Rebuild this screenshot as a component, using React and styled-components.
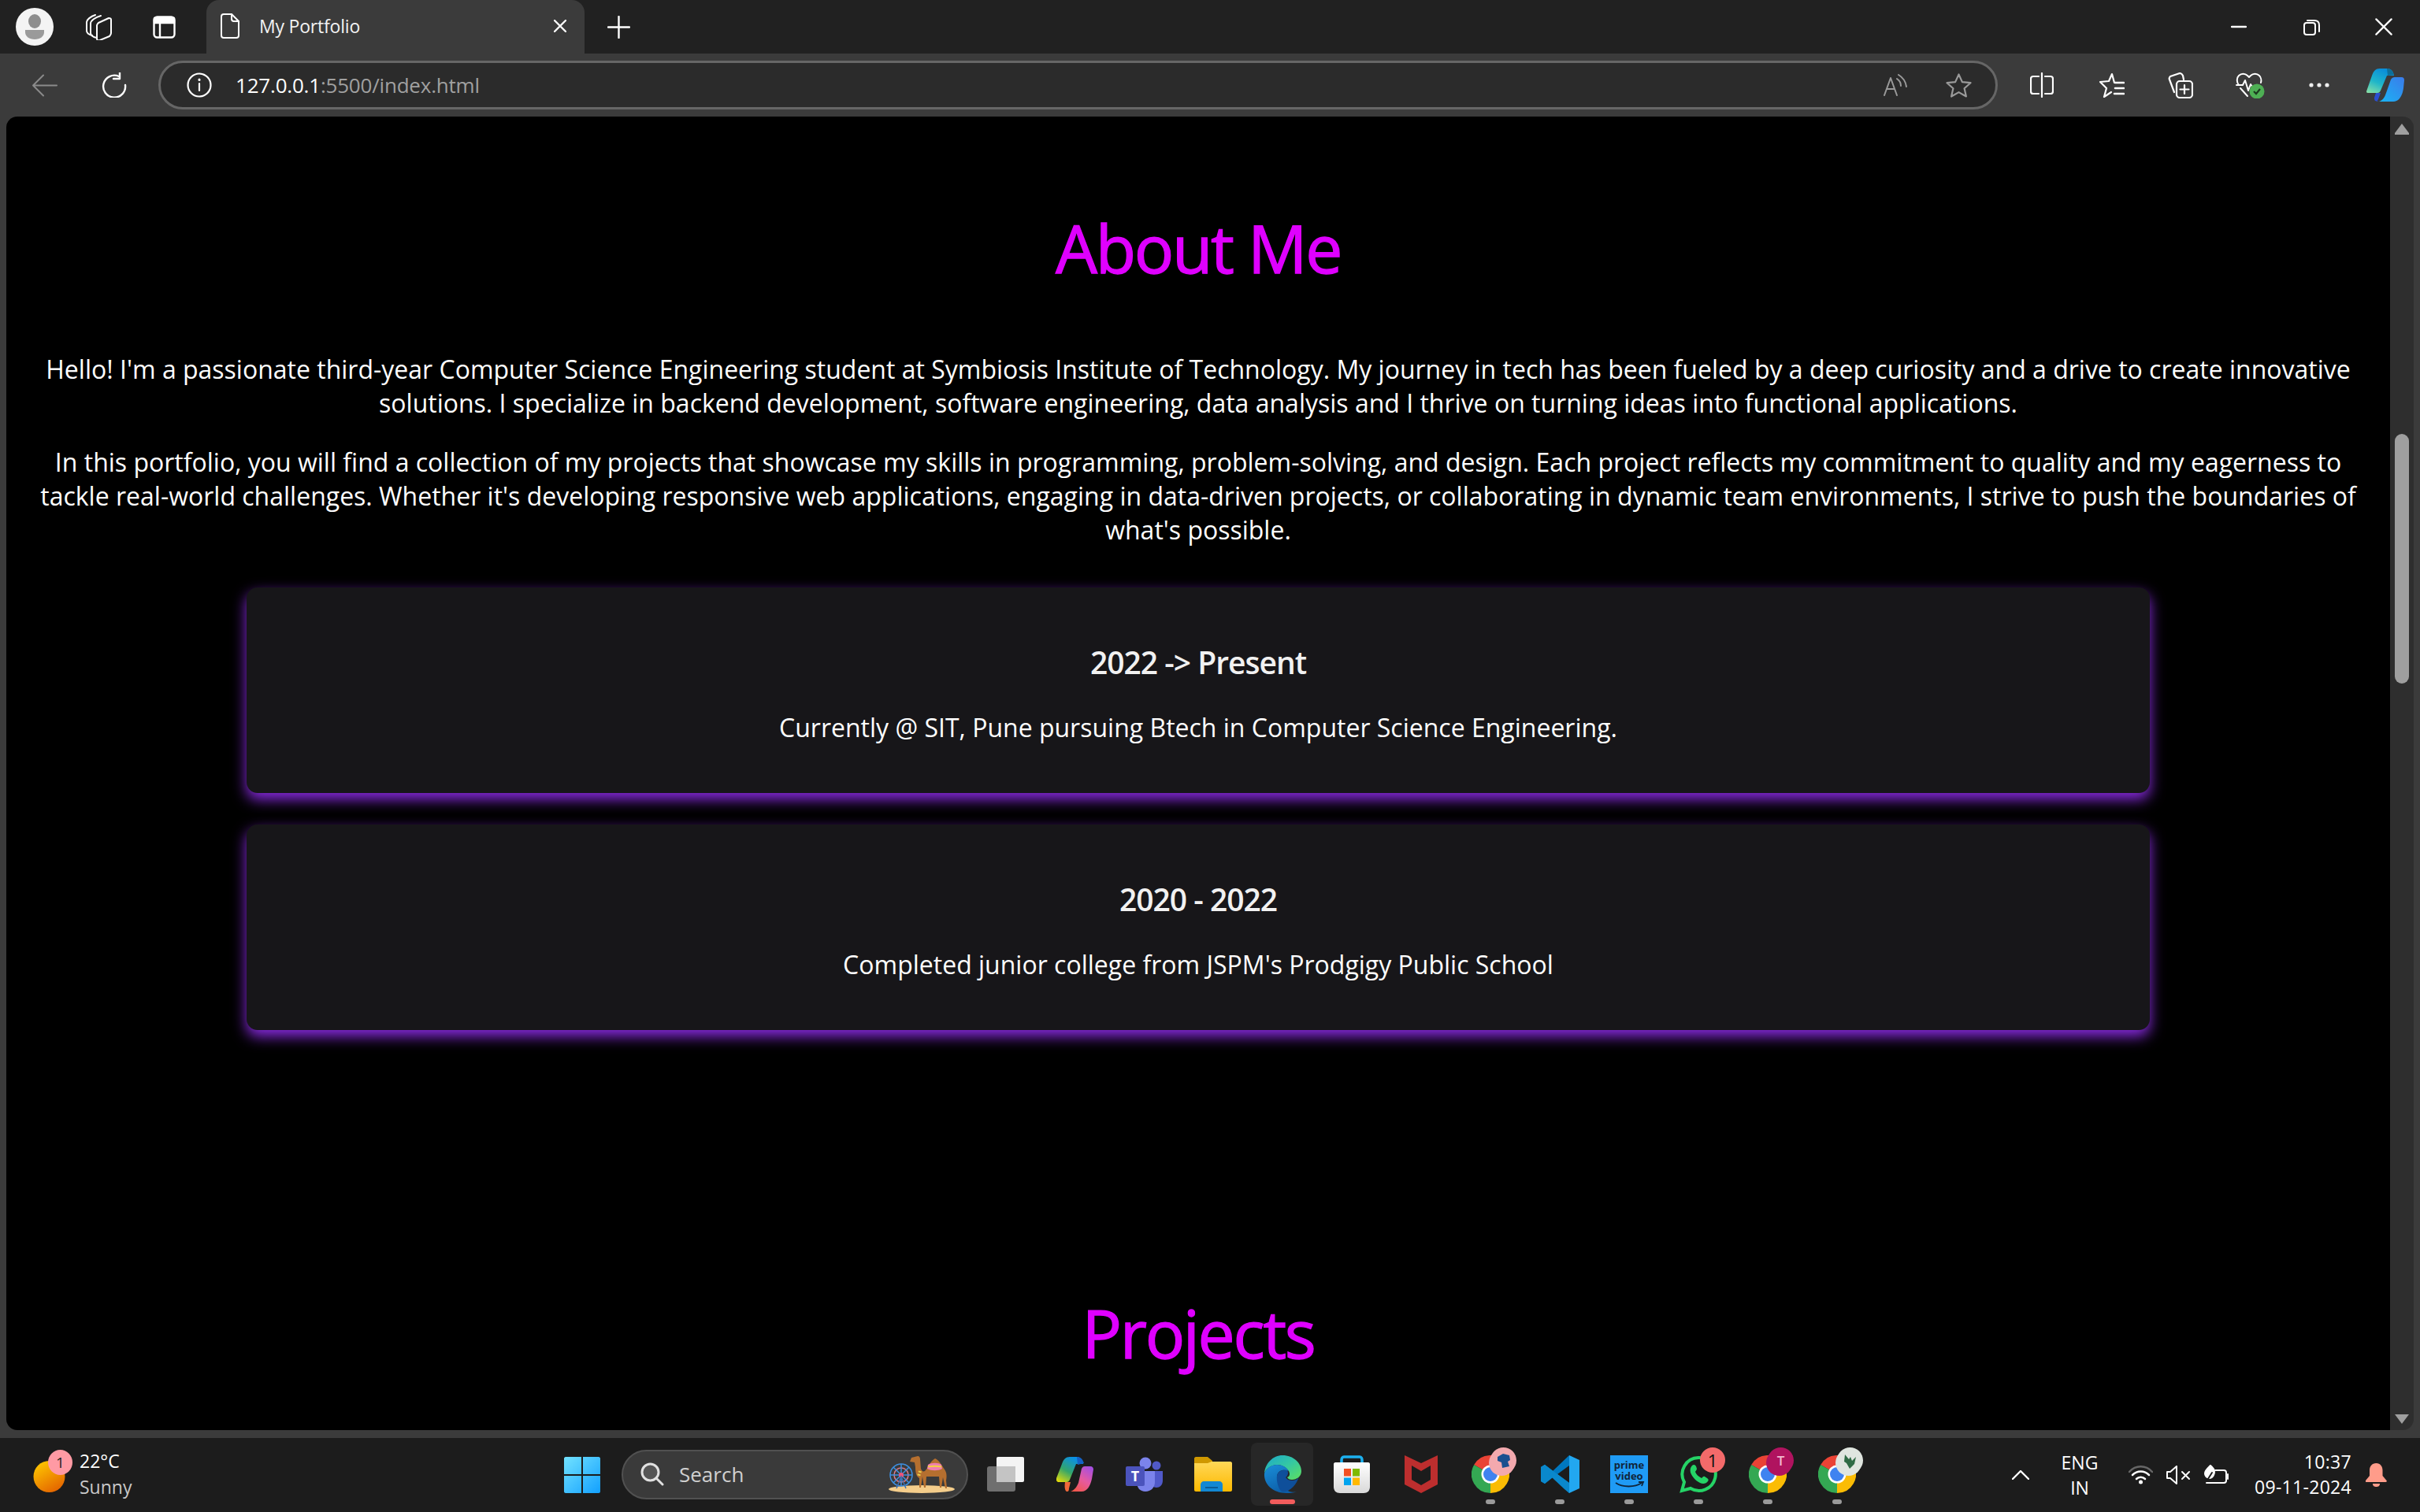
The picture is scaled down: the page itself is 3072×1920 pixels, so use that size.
import React from "react";
import styled, { createGlobalStyle } from "styled-components";

const GlobalStyle = createGlobalStyle`
  html, body {
    margin: 0;
    padding: 0;
    height: 100%;
    overflow: hidden;
    background: #1c1c1c;
  }
  #root { height: 100%; }
`;

const uiFont = `"Open Sans", "Noto Sans", sans-serif`;

const Screen = styled.div`
  display: flex;
  flex-direction: column;
  width: 3072px;
  height: 1920px;
  font-family: ${uiFont};
  color: #fff;
`;

/* browser chrome */
const TitleBar = styled.div`
  display: flex;
  align-items: center;
  height: 68px;
  flex: none;
  background: #212121;
`;
const Slot = styled.div`
  display: flex;
  align-items: center;
  justify-content: center;
  flex: none;
  width: ${(p) => p.$w || 88}px;
  height: 100%;
`;
const Tab = styled.div`
  display: flex;
  align-items: center;
  width: 480px;
  height: 68px;
  margin-left: 8px;
  padding: 0 23px 2px 18px;
  box-sizing: border-box;
  background: #3b3b3b;
  border-radius: 16px 16px 0 0;
`;
const TabTitle = styled.span`
  flex: 1;
  margin-left: 25px;
  font-size: 23px;
  letter-spacing: -0.2px;
  color: #f2f2f2;
`;
const Spacer = styled.div`
  flex: 1;
`;
const Toolbar = styled.div`
  display: flex;
  align-items: center;
  height: 80px;
  flex: none;
  padding-left: 12px;
  background: #3b3b3b;
`;
const AddressBar = styled.div`
  display: flex;
  align-items: center;
  width: 2335px;
  height: 62px;
  margin: 0 12px 0 13px;
  padding: 0 30px 0 33px;
  box-sizing: border-box;
  background: #2b2b2b;
  border: 3px solid #666;
  border-radius: 31px;
`;
const Url = styled.div`
  flex: 1;
  margin-left: 30px;
  font-size: 26px;
  letter-spacing: -0.2px;
  color: #a0a0a0;
`;
const UrlHost = styled.span`
  color: #fff;
`;
const AddressIcons = styled.div`
  display: flex;
  align-items: center;
  gap: 48px;
`;

/* page area */
const ViewportRow = styled.div`
  display: flex;
  flex: 1;
  min-height: 0;
  padding: 0 8px 10px;
  background: #3b3b3b;
`;
const Page = styled.main`
  flex: 1;
  min-width: 0;
  overflow: hidden;
  background: #000;
  border-radius: 14px 0 0 14px;
  text-align: center;
`;
const Scrollbar = styled.div`
  display: flex;
  flex-direction: column;
  align-items: center;
  justify-content: space-between;
  flex: none;
  width: 30px;
  padding: 9px 0 8px;
  box-sizing: border-box;
  background: #2e2e2e;
  border-radius: 0 14px 14px 0;
`;
const ScrollThumb = styled.div`
  width: 18px;
  height: 317px;
  margin-top: 380px;
  margin-bottom: auto;
  background: #9f9f9f;
  border-radius: 9px;
`;
const SectionTitle = styled.h1`
  margin: ${(p) => p.$top}px 0 0;
  font-size: 84px;
  line-height: 114px;
  font-weight: 400;
  letter-spacing: -2.400px;
  -webkit-text-stroke: 1.300px #df00ff;
  color: #df00ff;
`;
const Intro = styled.div`
  margin: 75px 40px 0;
`;
const Paragraph = styled.p`
  margin: 0 0 32px;
  font-size: 32px;
  line-height: 43px;
  color: #fff;
`;
const Timeline = styled.div`
  display: flex;
  flex-direction: column;
  gap: 40px;
  width: 2416px;
  margin: 52px auto 0;
`;
const Card = styled.article`
  padding: 68px 0 62px;
  background: #171619;
  border-radius: 14px;
  box-shadow: 0 8px 18px rgb(138, 43, 226);
`;
const CardTitle = styled.h3`
  margin: 0 0 34px;
  font-size: 39px;
  line-height: 54px;
  font-weight: 600;
  letter-spacing: -1px;
  color: #f1f1f1;
`;
const CardText = styled.p`
  margin: 0;
  font-size: 32px;
  line-height: 43px;
  color: #fff;
`;

/* taskbar */
const Taskbar = styled.footer`
  display: flex;
  align-items: center;
  flex: none;
  height: 94px;
  background: #1c1c1c;
`;
const Weather = styled.div`
  display: flex;
  align-items: center;
  width: 716px;
  padding-left: 42px;
  box-sizing: border-box;
`;
const SunWrap = styled.div`
  position: relative;
  display: flex;
  margin-top: 3px;
`;
const SunBadge = styled.span`
  position: absolute;
  top: -14px;
  left: 19px;
  width: 31px;
  height: 32px;
  border-radius: 50%;
  background: #ff9aa4;
  color: #222;
  font-size: 19px;
  line-height: 32px;
  text-align: center;
`;
const WeatherText = styled.div`
  margin: -3px 0 0 18px;
  font-size: 23px;
  line-height: 33px;
`;
const WeatherState = styled.div`
  color: #c9c9c9;
`;
const SearchBox = styled.div`
  display: flex;
  align-items: center;
  width: 440px;
  height: 63px;
  margin: -2px 0 0 27px;
  padding: 0 15px 0 22px;
  box-sizing: border-box;
  background: #3a3a3a;
  border: 2px solid #515151;
  border-radius: 32px;
`;
const SearchLabel = styled.span`
  flex: 1;
  margin-left: 19px;
  font-size: 26px;
  color: #d0d0d0;
`;
const AppSlot = styled.div`
  position: relative;
  display: flex;
  align-items: center;
  justify-content: center;
  flex: none;
  width: 88px;
  height: 94px;
`;
const ActiveBox = styled.div`
  position: absolute;
  top: 6px;
  left: 4px;
  width: 79px;
  height: 80px;
  background: #272727;
  border-radius: 8px;
`;
const AppIcon = styled.div`
  position: relative;
  display: flex;
  margin-top: -2px;
`;
const Running = styled.span`
  position: absolute;
  bottom: 10px;
  left: 50%;
  width: ${(p) => (p.$active ? 32 : 12)}px;
  height: 6px;
  margin-left: ${(p) => (p.$active ? -16 : -6)}px;
  border-radius: 3px;
  background: ${(p) => (p.$active ? "#f25c5c" : "#9a9a9a")};
`;
const CountBadge = styled.span`
  position: absolute;
  top: 12px;
  left: 46px;
  width: 32px;
  height: 32px;
  border-radius: 50%;
  background: #f46a6a;
  color: #111;
  font-size: 22px;
  line-height: 32px;
  text-align: center;
`;
const ProfileBadge = styled.span`
  position: absolute;
  top: 12px;
  left: 44px;
  width: 33px;
  height: 33px;
  display: flex;
  align-items: center;
  justify-content: center;
  border-radius: 50%;
  background: ${(p) => p.$bg};
  box-shadow: -2px 3px 0 ${(p) => p.$bg};
  color: #f3b8cf;
  font-size: 17px;
  font-weight: 600;
`;
const Tray = styled.div`
  display: flex;
  align-items: center;
  height: 100%;
  margin-left: 178px;
`;
const Lang = styled.div`
  width: 66px;
  margin-left: 31px;
  font-size: 23px;
  line-height: 32px;
  text-align: center;
`;
const TrayIcons = styled.div`
  display: flex;
  align-items: center;
  gap: 17px;
  margin-left: 29px;
`;
const Clock = styled.div`
  width: 140px;
  margin: -2px 0 0 16px;
  font-size: 23px;
  letter-spacing: 0.3px;
  line-height: 32px;
  text-align: right;
`;
const BellWrap = styled.div`
  display: flex;
  margin-left: 18px;
`;

const Line = styled.svg`
  display: block;
  flex: none;
  fill: none;
  stroke: ${(p) => p.$color || "#fff"};
  stroke-width: ${(p) => p.$sw || 2.4};
  stroke-linecap: round;
  stroke-linejoin: round;
`;
const Art = styled.svg`
  display: block;
  flex: none;
`;

const Avatar = () => (
  <Art width="48" height="48" viewBox="0 0 48 48">
    <circle cx="24" cy="24" r="24" fill="#f4f4f4" />
    <ellipse cx="24" cy="17" rx="8" ry="9" fill="#8e8e8e" />
    <path d="M12 28h24v3c0 5-5 9-12 9s-12-4-12-9z" fill="#9a9a9a" />
  </Art>
);
const Workspaces = () => (
  <Line width="33" height="33" viewBox="0 0 33 33" $sw="2">
    <path d="M8 27c-4-1-7-3-7-6V10c0-3 5-7 11-9" />
    <path d="M14 30c-5-1-8-3-8-6V12c0-4 6-8 13-10" />
    <path d="M14 14c0-1 1-2 2-3l13-6c2 0 3 0 3 2v17c0 2-1 3-2 4l-12 5c-3 1-4 0-4-2z" />
  </Line>
);
const VerticalTabs = () => (
  <Line width="29" height="29" viewBox="0 0 29 29">
    <rect x="1.5" y="1.5" width="26" height="26" rx="4" />
    <path d="M2 3h25v6H2z" fill="#fff" />
    <path d="M9 9v18" />
  </Line>
);
const DocIcon = () => (
  <Line width="24" height="32" viewBox="0 0 24 32" $sw="2">
    <path d="M4 1h10l9 9v18c0 2-1 3-3 3H4c-2 0-3-1-3-3V4c0-2 1-3 3-3z" />
    <path d="M14 1v6c0 2 1 3 3 3h6" />
  </Line>
);
const Cross = ({ size = 16, sw = 2.4 }) => (
  <Line width={size} height={size} viewBox="0 0 16 16" $sw={sw}>
    <path d="M1 1l14 14M15 1L1 15" />
  </Line>
);
const Plus = () => (
  <Line width="29" height="29" viewBox="0 0 29 29" $sw="2.4">
    <path d="M14.500 1v27M1 14.500h27" />
  </Line>
);
const Minimize = () => (
  <Line width="20" height="4" viewBox="0 0 20 4" $sw="2.4">
    <path d="M1 2h18" />
  </Line>
);
const Restore = () => (
  <Line width="21" height="21" viewBox="0 0 21 21" $sw="2">
    <rect x="1" y="5" width="14" height="15" rx="3" />
    <path d="M5 2h9c4 0 6 2 6 6v8" />
  </Line>
);
const BackArrow = () => (
  <Line width="33" height="29" viewBox="0 0 33 29" $color="#8b8b8b" $sw="2">
    <path d="M32 14.500H2M15 1.500L2 14.500l13 13" />
  </Line>
);
const Reload = () => (
  <Line width="34" height="32" viewBox="0 0 34 32" $sw="2.4">
    <path d="M24 5a14 14 0 1 0 8 11" />
    <path d="M25 0v8h-8" />
  </Line>
);
const InfoIcon = () => (
  <Line width="32" height="32" viewBox="0 0 32 32" $sw="2.2">
    <circle cx="16" cy="16" r="14.500" />
    <path d="M16 14v9" />
    <path d="M16 9v.5" strokeWidth="3" />
  </Line>
);
const ReadAloud = () => (
  <Line width="31" height="28" viewBox="0 0 31 28" $color="#9a9a9a" $sw="2">
    <path d="M1 27L9 5l8 22M4 19h10" />
    <path d="M17 6c3 2 5 5 5 9M19 1c5 3 9 8 10 15" />
  </Line>
);
const Star = () => (
  <Line width="33" height="31" viewBox="0 0 33 31" $color="#9a9a9a" $sw="2.2">
    <path d="M16.500 1.500l4.400 9.600 10.600 1.100-7.900 7 2.300 10.300-9.400-5.400-9.400 5.400 2.300-10.300-7.900-7 10.600-1.100z" />
  </Line>
);
const SplitScreen = () => (
  <Line width="30" height="32" viewBox="0 0 30 32" $sw="2.2">
    <path d="M11 5H4C2 5 1 6 1 8v16c0 2 1 3 3 3h7M19 5h7c2 0 3 1 3 3v16c0 2-1 3-3 3h-7M15 1v30" />
  </Line>
);
const Favorites = () => (
  <Line width="33" height="32" viewBox="0 0 33 32" $sw="2.200">
    <path d="M20 13l-3-11-4 9-11 1 8 8-3 11 9-6" />
    <path d="M21 13h11M21 20h11M20 27h12" strokeWidth="2.600" />
  </Line>
);
const Collections = () => (
  <Line width="32" height="33" viewBox="0 0 32 33" $sw="2.200">
    <path d="M8 25L2 9c-1-2 0-3 1-4l12-4c2 0 3 1 4 3l1 5" />
    <rect x="11" y="11" width="20" height="21" rx="4" />
    <path d="M21 16v11M15.500 21.500h11" />
  </Line>
);
const Health = () => (
  <Art width="37" height="33" viewBox="0 0 37 33">
    <Line as="g" $sw="2">
      <path d="M4 16C1 12 1 7 4 4c3-3 8-3 11 0l2 2 2-2c3-3 8-3 11 0 2 2 3 6 2 9" />
      <path d="M1 16h8l3-6 4 13 3-8 2 3" />
      <path d="M6 20l9 10" />
    </Line>
    <circle cx="27" cy="24" r="9.500" fill="#4eaf54" />
    <path d="M23 24l3 3 5-6" fill="none" stroke="#1c3a20" strokeWidth="2.200" />
  </Art>
);
const Dots = () => (
  <Art width="26" height="6" viewBox="0 0 26 6" fill="#eee">
    <circle cx="3" cy="3" r="2.600" />
    <circle cx="13" cy="3" r="2.600" />
    <circle cx="23" cy="3" r="2.600" />
  </Art>
);
const EdgeCopilot = () => (
  <Art width="48" height="42" viewBox="0 0 48 42">
    <defs>
      <linearGradient id="ec1" x1="0" y1="1" x2="0.500" y2="0">
        <stop offset="0" stopColor="#8fe3a5" />
        <stop offset="0.500" stopColor="#1fb6c9" />
        <stop offset="1" stopColor="#0a8fd9" />
      </linearGradient>
      <linearGradient id="ec2" x1="0" y1="1" x2="1" y2="0">
        <stop offset="0" stopColor="#19b5f5" />
        <stop offset="1" stopColor="#3b7bea" />
      </linearGradient>
    </defs>
    <path d="M26 0h-9c-5 0-8 3-10 9L0 29c0 2 1 2 3 2h11c2 0 3-1 4-3L26 9l9 0c-1-6-4-9-9-9z" fill="url(#ec1)" />
    <path d="M26 0c4 0 7 2 9 8l-8 1z" fill="#0d6f9a" />
    <path d="M36 11h8c3 0 4 1 4 4l-1 10c-1 8-5 17-13 17H16c5-2 7-5 9-11l6-17c1-2 3-3 5-3z" fill="url(#ec2)" />
    <path d="M12 31h6l-3 8c-1 2-2 3-3 3H16l-5-1c-1-1-1-3-1-4z" fill="#2a4ed0" />
  </Art>
);
const ArrowTriangle = ({ down }) => (
  <Art width="18" height="14" viewBox="0 0 18 14" fill="#9f9f9f">
    <path d={down ? "M0 2h18L9 14z" : "M9 0l9 12v2H0v-2z"} />
  </Art>
);

const SunIcon = () => (
  <Art width="41" height="40" viewBox="0 0 41 40">
    <defs>
      <linearGradient id="sun" x1="0.200" y1="0" x2="0.800" y2="1">
        <stop offset="0" stopColor="#ffc800" />
        <stop offset="1" stopColor="#e25f00" />
      </linearGradient>
    </defs>
    <circle cx="20.500" cy="20" r="20" fill="url(#sun)" />
  </Art>
);
const WindowsLogo = () => (
  <Art width="46" height="46" viewBox="0 0 46 46">
    <defs>
      <linearGradient id="win" x1="0" y1="0" x2="1" y2="1">
        <stop offset="0" stopColor="#72e2ff" />
        <stop offset="1" stopColor="#12a0ff" />
      </linearGradient>
    </defs>
    <path d="M2 0h20v22H0V2c0-1 1-2 2-2zM24 0h20c1 0 2 1 2 2v20H24zM0 24h22v22H2c-1 0-2-1-2-2zM24 24h22v20c0 1-1 2-2 2H24z" fill="url(#win)" />
  </Art>
);
const SearchIcon = () => (
  <Line width="30" height="30" viewBox="0 0 30 30" $color="#e0e0e0" $sw="3">
    <circle cx="12.500" cy="12.500" r="10.500" fill="#555" />
    <path d="M20 20l8 8" />
  </Line>
);
const CamelScene = () => (
  <Art width="84" height="48" viewBox="0 0 84 48">
    <ellipse cx="42" cy="43" rx="42" ry="5" fill="#f4cd8b" />
    <g fill="none" stroke="#3d8fe0" strokeWidth="1.500">
      <circle cx="16" cy="25" r="14" />
      <circle cx="16" cy="25" r="9" stroke="#d97a8c" />
      <path d="M16 11v28M2 25h28M6 15l20 20M26 15L6 35" />
    </g>
    <circle cx="16" cy="25" r="3" fill="#f0527a" />
    <path d="M10 42l6-15 6 15" fill="none" stroke="#3d6fb0" strokeWidth="1.500" />
    <path d="M29 3l8-2c2 0 3 2 3 4l1 12c1 3 3 4 5 3 4-3 6-12 13-16 5 2 8 8 12 14 3 4 3 9 2 14l1 10h-2l-3-14-2 13h-2l-1-14H48l-1 14h-2l-2-14-2 14h-2V29c-4-2-5-8-5-14l-1-6-6-1z" fill="#b56f2f" />
    <path d="M50 12c4-3 14-3 17 0l1 5c-5 3-14 3-19 0z" fill="#f07fb0" />
    <path d="M50 14.500c5-1 12-1 17 0" fill="none" stroke="#f5d340" strokeWidth="2" />
    <path d="M40 20l-2 7" stroke="#e8d04a" strokeWidth="4" strokeDasharray="2 2" fill="none" />
  </Art>
);
const TaskView = () => (
  <Art width="47" height="44" viewBox="0 0 47 44">
    <rect x="0" y="12" width="36" height="32" rx="3" fill="#6f6f6f" />
    <rect x="12" y="0" width="35" height="32" rx="2" fill="#f4f4f4" />
    <rect x="12" y="12" width="24" height="20" fill="#c4c4c4" />
  </Art>
);
const CopilotApp = () => (
  <Art width="47" height="44" viewBox="0 0 47 44">
    <defs>
      <linearGradient id="ca1" x1="0" y1="1" x2="0.600" y2="0">
        <stop offset="0" stopColor="#f5e000" />
        <stop offset="0.500" stopColor="#34a66a" />
        <stop offset="1" stopColor="#0a8fe6" />
      </linearGradient>
      <linearGradient id="ca2" x1="0.200" y1="1" x2="0.800" y2="0">
        <stop offset="0" stopColor="#f2574a" />
        <stop offset="0.500" stopColor="#e65aa0" />
        <stop offset="1" stopColor="#a64fe0" />
      </linearGradient>
    </defs>
    <path d="M26 0h-9c-5 0-8 3-10 9L0 27c-1 3 1 5 3 5h10c2 0 3-1 4-3l8-20h9c-1-6-4-9-8-9z" fill="url(#ca1)" />
    <path d="M26 0c4 0 7 2 9 8l-8 2z" fill="#1560c4" />
    <path d="M36 12h7c3 0 4 2 4 4l-2 12c-2 9-6 16-13 16H18c5-2 8-6 10-11l4-18c1-2 2-3 4-3z" fill="url(#ca2)" />
    <path d="M11 32h7l-2 8c0 3-1 4-2 4h-1c-2-1-3-5-2-12z" fill="#f0683a" />
  </Art>
);
const TeamsIcon = () => (
  <Art width="47" height="44" viewBox="0 0 47 44">
    <circle cx="25" cy="8" r="7.500" fill="#7b83eb" />
    <circle cx="39" cy="11" r="5.500" fill="#5059c9" />
    <path d="M31 18h16v12c0 6-4 9-8 9s-8-3-8-9z" fill="#5059c9" />
    <path d="M14 18h23v14c0 7-5 12-12 12S14 39 14 32z" fill="#7b83eb" />
    <rect x="0" y="12" width="24" height="25" rx="2" fill="#4b53bc" />
    <text x="12" y="31" textAnchor="middle" fontSize="18" fontWeight="700" fill="#fff" fontFamily="Open Sans">T</text>
  </Art>
);
const FolderIcon = () => (
  <Art width="48" height="44" viewBox="0 0 48 44">
    <defs>
      <linearGradient id="fold" x1="0" y1="0" x2="0" y2="1">
        <stop offset="0" stopColor="#ffd858" />
        <stop offset="1" stopColor="#fdb900" />
      </linearGradient>
    </defs>
    <path d="M2 0h15l6 5v8H0V2c0-1 1-2 2-2z" fill="#cf9800" />
    <path d="M0 8h17l5-2h24c1 0 2 1 2 2v34c0 1-1 2-2 2H2c-1 0-2-1-2-2z" fill="url(#fold)" />
    <path d="M8 44V35c0-2 2-4 4-4h20c2 0 4 2 4 4v9z" fill="#1388d3" />
    <path d="M14 39h16" stroke="#0b5c96" strokeWidth="2" />
  </Art>
);
const EdgeIcon = () => (
  <Art width="48" height="48" viewBox="0 0 48 48">
    <defs>
      <linearGradient id="edg1" x1="0" y1="0" x2="1" y2="1">
        <stop offset="0" stopColor="#1ca7c9" />
        <stop offset="0.500" stopColor="#34c7a4" />
        <stop offset="1" stopColor="#5ee05e" />
      </linearGradient>
      <linearGradient id="edg2" x1="0" y1="0" x2="0.500" y2="1">
        <stop offset="0" stopColor="#1a8fd9" />
        <stop offset="1" stopColor="#0c5ea8" />
      </linearGradient>
    </defs>
    <path d="M24 0c14 0 24 10 24 20 0 7-6 11-12 11-3 0-5-1-6-3 3-1 4-4 2-8-3-5-9-8-15-8C10 12 3 17 1 23 2 10 12 0 24 0z" fill="url(#edg1)" />
    <path d="M1 23c3-7 9-11 16-11 7 0 12 3 15 8-6-3-14-1-15 6-1 8 6 16 16 20 3 1 6 1 9 0-5 2-9 2-13 2C12 48 0 37 1 23z" fill="url(#edg2)" />
    <path d="M17 26c1-6 7-8 13-7 2 3 1 7-2 9 2 3 5 4 8 4 4 0 8-2 9-5-3 10-12 21-22 19-4-3-7-13-6-20z" fill="#0f4f9a" />
  </Art>
);
const StoreIcon = () => (
  <Art width="46" height="48" viewBox="0 0 46 48">
    <defs>
      <linearGradient id="bag" x1="0" y1="0" x2="0" y2="1">
        <stop offset="0" stopColor="#fff" />
        <stop offset="1" stopColor="#d9d9d9" />
      </linearGradient>
    </defs>
    <path d="M10 10V6c0-2 1-4 3-4h20c2 0 3 2 3 4v4" fill="none" stroke="#1cb0ee" strokeWidth="3.500" />
    <path d="M0 11c0-1 1-2 2-2h42c1 0 2 1 2 2v29c0 5-3 8-8 8H8c-5 0-8-3-8-8z" fill="url(#bag)" />
    <rect x="13" y="17" width="9" height="9.500" fill="#f25022" />
    <rect x="24" y="17" width="9" height="9.500" fill="#7fba00" />
    <rect x="13" y="28.500" width="9" height="9.500" fill="#00a4ef" />
    <rect x="24" y="28.500" width="9" height="9.500" fill="#ffb900" />
  </Art>
);
const McAfeeIcon = () => (
  <Art width="42" height="48" viewBox="0 0 42 48">
    <path d="M0 0l21 10L42 0v37L21 48 0 37zM9 13v18l12 7 12-7V13L21 20z" fill="#bd2e2e" fillRule="evenodd" />
  </Art>
);
const ChromeIcon = () => (
  <Art width="48" height="48" viewBox="0 0 48 48">
    <path d="M24 24L3.200 12A24 24 0 0 1 44.800 12z" fill="#ea4335" />
    <path d="M24 24L24 48A24 24 0 0 1 3.200 12z" fill="#34a853" />
    <path d="M24 24L44.800 12A24 24 0 0 1 24 48z" fill="#fbbc04" />
    <circle cx="24" cy="24" r="11.500" fill="#fff" />
    <circle cx="24" cy="24" r="9" fill="#3f83f0" />
  </Art>
);
const VsCodeIcon = () => (
  <Art width="49" height="48" viewBox="0 0 49 48">
    <path d="M36 0l13 6v36l-13 6z" fill="#22a7f0" />
    <path d="M36 0L15 20 5 12 0 15v18l5 3 10-8 21 20z" fill="#0078c0" />
    <path d="M36 13L21 24l15 11z" fill="#1c1c1c" />
    <path d="M5 12l-5 3 30 28 6 5v-13z" fill="#0a88cc" />
    <path d="M0 15v18l5 3 10-8-5-4 5-4-10-8z" fill="#0a88cc" />
  </Art>
);
const PrimeVideoIcon = () => (
  <Art width="48" height="48" viewBox="0 0 48 48">
    <rect width="48" height="48" fill="#1f9bf5" />
    <text x="24" y="17" textAnchor="middle" fontSize="13" fontWeight="700" fill="#10253a" fontFamily="Open Sans">prime</text>
    <text x="24" y="31" textAnchor="middle" fontSize="13" fontWeight="700" fill="#10253a" fontFamily="Open Sans">video</text>
    <path d="M7 35c9 6 24 6 33 0M36 34l6 0-2 5" fill="none" stroke="#10253a" strokeWidth="1.800" />
  </Art>
);
const WhatsAppIcon = () => (
  <Art width="48" height="48" viewBox="0 0 48 48">
    <path d="M24 3a21 21 0 0 0-18 31L3 45l11-3a21 21 0 1 0 10-39z" fill="none" stroke="#25d366" strokeWidth="4" />
    <path d="M16 13c2-2 4-1 5 1l1 3c0 2-2 3-2 4 1 3 4 6 8 8 1 0 2-3 4-2l3 2c2 1 2 3 1 4-2 3-6 4-10 2-6-3-10-8-12-13-1-4 0-7 2-9z" fill="#25d366" />
  </Art>
);
const ChevronUp = () => (
  <Line width="22" height="12" viewBox="0 0 22 12" $sw="2.400">
    <path d="M1 11L11 1l10 10" />
  </Line>
);
const WifiIcon = () => (
  <Art width="31" height="24" viewBox="0 0 31 24" fill="none" strokeLinecap="round">
    <path d="M1 8c8-9 21-9 29 0" stroke="#666" strokeWidth="2.500" />
    <path d="M5 12c6-6 15-6 21 0M10 17c3-3 8-3 11 0" stroke="#fff" strokeWidth="2.500" />
    <circle cx="15.500" cy="21" r="2.500" fill="#fff" />
  </Art>
);
const MutedIcon = () => (
  <Line width="31" height="24" viewBox="0 0 31 24" $sw="2">
    <path d="M1 8h4l8-7v22l-8-7H1z" />
    <path d="M20 8l9 9M29 8l-9 9" />
  </Line>
);
const BatteryLeaf = () => (
  <Line width="31" height="26" viewBox="0 0 31 26" $sw="2">
    <path d="M14 7h11c2 0 3 1 3 3v10c0 2-1 3-3 3H3" />
    <path d="M30 12v6" />
    <path d="M8 1c5 4 6 8 4 12-1 3-4 4-6 4-3-1-5-3-5-6 0-4 4-7 7-10z" fill="#fff" />
    <path d="M10 10l-7 11" stroke="#1c1c1c" />
  </Line>
);
const BellIcon = () => (
  <Art width="27" height="30" viewBox="0 0 27 30" fill="#ff9c8a">
    <path d="M13.500 0c5 0 8 4 8 9v7l5 6c1 1 0 2-1 2H1c-1 0-2-1-1-2l5-6V9c0-5 3-9 8.500-9z" />
    <path d="M9 26h9c0 3-2 4-4.500 4S9 29 9 26z" />
  </Art>
);

const Apps = [
  { key: "task", icon: <TaskView /> },
  { key: "copilot", icon: <CopilotApp /> },
  { key: "teams", icon: <TeamsIcon /> },
  { key: "folder", icon: <FolderIcon /> },
  { key: "edge", icon: <EdgeIcon />, active: true },
  { key: "store", icon: <StoreIcon /> },
  { key: "mcafee", icon: <McAfeeIcon /> },
  { key: "chrome1", icon: <ChromeIcon />, running: true, badge: <ProfileBadge $bg="#f3a9ae"><Art width="22" height="22" viewBox="0 0 22 22"><path d="M3 6l7-4 8 2 1 6-3 2 2 6-9 2-1-7-5-2z" fill="#1a4f8f" /></Art></ProfileBadge> },
  { key: "vscode", icon: <VsCodeIcon />, running: true },
  { key: "prime", icon: <PrimeVideoIcon />, running: true },
  { key: "whatsapp", icon: <WhatsAppIcon />, running: true, badge: <CountBadge>1</CountBadge> },
  { key: "chrome2", icon: <ChromeIcon />, running: true, badge: <ProfileBadge $bg="#b0135f">T</ProfileBadge> },
  { key: "chrome3", icon: <ChromeIcon />, running: true, badge: <ProfileBadge $bg="#dfe5df"><Art width="24" height="24" viewBox="0 0 24 24"><path d="M5 4l5 6 2-3 2 5 5-5-2 9-6 6-4-7-3-2z" fill="#2f6b45" /></Art></ProfileBadge> },
];

const appView = ({ key, icon, active, running, badge }) => (
  <AppSlot key={key}>
    {active && <ActiveBox />}
    <AppIcon>{icon}</AppIcon>
    {(active || running) && <Running $active={active} />}
    {badge}
  </AppSlot>
);

const experiences = [
  {
    period: "2022 -> Present",
    text: "Currently @ SIT, Pune pursuing Btech in Computer Science Engineering.",
  },
  {
    period: "2020 - 2022",
    text: "Completed junior college from JSPM's Prodgigy Public School",
  },
];

const App = () => {
  return (
    <Screen>
      <GlobalStyle />
      <TitleBar>
        <Slot $w={88}><Avatar /></Slot>
        <Slot $w={74}><Workspaces /></Slot>
        <Slot $w={92}><VerticalTabs /></Slot>
        <Tab>
          <DocIcon />
          <TabTitle>My Portfolio</TabTitle>
          <Cross />
        </Tab>
        <Slot $w={86}><Plus /></Slot>
        <Spacer />
        <Slot $w={92}><Minimize /></Slot>
        <Slot $w={92}><Restore /></Slot>
        <Slot $w={92}><Cross size={22} sw={1.6} /></Slot>
      </TitleBar>
      <Toolbar>
        <Slot><BackArrow /></Slot>
        <Slot><Reload /></Slot>
        <AddressBar>
          <InfoIcon />
          <Url><UrlHost>127.0.0.1</UrlHost>:5500/index.html</Url>
          <AddressIcons>
            <ReadAloud />
            <Star />
          </AddressIcons>
        </AddressBar>
        <Slot><SplitScreen /></Slot>
        <Slot><Favorites /></Slot>
        <Slot><Collections /></Slot>
        <Slot><Health /></Slot>
        <Slot><Dots /></Slot>
        <Slot $w={80}><EdgeCopilot /></Slot>
      </Toolbar>
      <ViewportRow>
        <Page>
          <SectionTitle $top={110}>About Me</SectionTitle>
          <Intro>
            <Paragraph>
              Hello! I'm a passionate third-year Computer Science Engineering student at Symbiosis Institute of Technology. My journey in tech has been fueled by a deep curiosity and a drive to create innovative solutions. I specialize in backend development, software engineering, data analysis and I thrive on turning ideas into functional applications.
            </Paragraph>
            <Paragraph>
              In this portfolio, you will find a collection of my projects that showcase my skills in programming, problem-solving, and design. Each project reflects my commitment to quality and my eagerness to tackle real-world challenges. Whether it's developing responsive web applications, engaging in data-driven projects, or collaborating in dynamic team environments, I strive to push the boundaries of what's possible.
            </Paragraph>
          </Intro>
          <Timeline>
            {experiences.map(({ period, text }) => (
              <Card key={period}>
                <CardTitle>{period}</CardTitle>
                <CardText>{text}</CardText>
              </Card>
            ))}
          </Timeline>
          <SectionTitle $top={328}>Projects</SectionTitle>
        </Page>
        <Scrollbar>
          <ArrowTriangle />
          <ScrollThumb />
          <ArrowTriangle down />
        </Scrollbar>
      </ViewportRow>
      <Taskbar>
        <Weather>
          <SunWrap>
            <SunIcon />
            <SunBadge>1</SunBadge>
          </SunWrap>
          <WeatherText>
            <div>22°C</div>
            <WeatherState>Sunny</WeatherState>
          </WeatherText>
        </Weather>
        <WindowsLogo />
        <SearchBox>
          <SearchIcon />
          <SearchLabel>Search</SearchLabel>
          <CamelScene />
        </SearchBox>
        <Slot $w={3} />
        {Apps.map(appView)}
        <Tray>
          <ChevronUp />
          <Lang>ENG<br />IN</Lang>
          <TrayIcons>
            <WifiIcon />
            <MutedIcon />
            <BatteryLeaf />
          </TrayIcons>
          <Clock>10:37<br />09-11-2024</Clock>
          <BellWrap><BellIcon /></BellWrap>
        </Tray>
      </Taskbar>
    </Screen>
  );
};

export default App;
